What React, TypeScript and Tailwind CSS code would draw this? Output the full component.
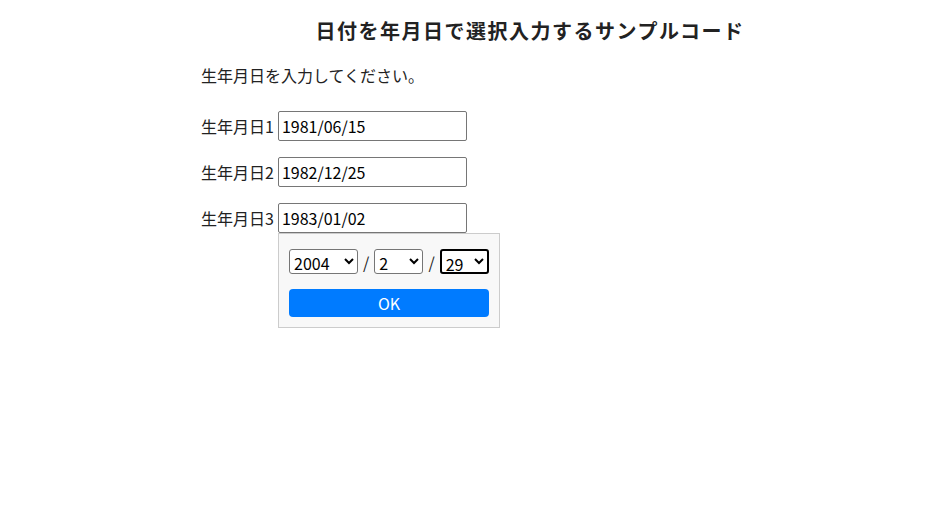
import { useState } from 'react'

const font = { fontFamily: '"Noto Sans CJK JP", "Noto Sans", sans-serif' }

const inputClass =
  'h-[30px] w-[189px] rounded-[2px] border border-[#767676] bg-white px-[3px] text-[16px] leading-none text-black outline-none'
const selectClass =
  'h-[25px] rounded-[3px] border border-[#767676] bg-white pl-0 text-[16px] leading-none text-black'

const ROWS = [
  { label: '生年月日1', value: '1981/06/15' },
  { label: '生年月日2', value: '1982/12/25' },
  { label: '生年月日3', value: '1983/01/02' },
]

export default function App() {
  const [year, setYear] = useState('2004')
  const [month, setMonth] = useState('2')
  const [day, setDay] = useState('29')

  const years = Array.from({ length: 60 }, (_, i) => String(1960 + i))
  const months = Array.from({ length: 12 }, (_, i) => String(i + 1))
  const days = Array.from({ length: 31 }, (_, i) => String(i + 1))

  return (
    <div className="min-h-[511px] w-full bg-white text-[#222]" style={font}>
      <div className="ml-[201px] flex w-[658px] flex-col pt-[17px]">
        <h1 className="text-center text-[20px] font-bold leading-[28px] tracking-[1.5px] text-[#222]">
          日付を年月日で選択入力するサンプルコード
        </h1>
        <p className="mt-[18px] text-[16px] leading-[24px]">生年月日を入力してください。</p>

        <div className="mt-[24px] flex flex-col gap-[16px]">
          {ROWS.map((row, idx) => (
            <div key={row.label} className="relative flex items-center gap-[4px]">
              <span className="text-[16px] leading-none">{row.label}</span>
              <input className={inputClass} defaultValue={row.value} readOnly />
              {idx === 2 && (
                <div className="absolute left-[77px] top-[30px] z-10 flex w-[222px] flex-col gap-[15px] border border-[#cccccc] bg-[#f8f8f8] px-[10px] pb-[10px] pt-[15px]">
                  <div className="flex items-center gap-[5px] text-[16px]">
                    <select className={`${selectClass} w-[70px]`} value={year} onChange={(e) => setYear(e.target.value)}>
                      {years.map((y) => (
                        <option key={y}>{y}</option>
                      ))}
                    </select>
                    <span>/</span>
                    <select className={`${selectClass} w-[50px]`} value={month} onChange={(e) => setMonth(e.target.value)}>
                      {months.map((m) => (
                        <option key={m}>{m}</option>
                      ))}
                    </select>
                    <span>/</span>
                    <select
                      className={`${selectClass} w-[50px] border-2 border-black`}
                      value={day}
                      onChange={(e) => setDay(e.target.value)}
                    >
                      {days.map((d) => (
                        <option key={d}>{d}</option>
                      ))}
                    </select>
                  </div>
                  <button className="h-[28px] w-full rounded-[4px] bg-[#007bff] text-[16px] leading-none text-white">
                    OK
                  </button>
                </div>
              )}
            </div>
          ))}
        </div>
      </div>
    </div>
  )
}
